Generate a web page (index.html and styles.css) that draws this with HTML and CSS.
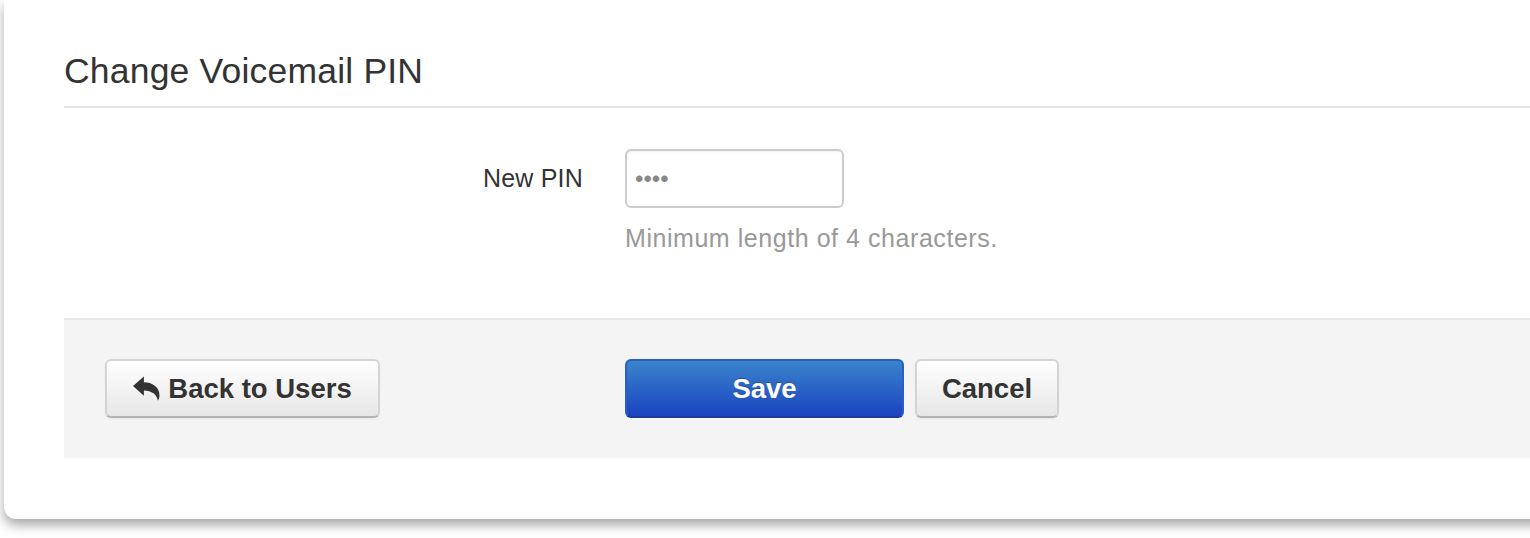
FILE: index.html
```html
<!DOCTYPE html>
<html lang="en">
<head>
<meta charset="utf-8">
<title>Change Voicemail PIN</title>
<link rel="stylesheet" href="styles.css">
</head>
<body>
<div class="card">
  <form class="form">
    <h2 class="legend">Change Voicemail PIN</h2>
    <div class="row">
      <label class="label" for="pin">New PIN</label>
      <div class="controls">
        <input class="input" id="pin" type="password" value="1234">
        <p class="help">Minimum length of 4 characters.</p>
      </div>
    </div>
    <div class="actions">
      <div class="actions-left">
        <button type="button" class="btn btn-back">
          <svg class="icon" viewBox="0 0 26 24" width="27" height="25" aria-hidden="true">
            <path d="M0 9.5 L10.5 0.5 V6 C18.5 6 25.5 10.5 25.5 18.5 C25.5 20.5 25 22.5 24 23.8 C23 18 18 14 10.5 14 V19 Z" fill="#333"/>
          </svg>
          Back to Users
        </button>
      </div>
      <div class="actions-right">
        <button type="submit" class="btn btn-primary">Save</button>
        <button type="button" class="btn btn-cancel">Cancel</button>
      </div>
    </div>
  </form>
</div>
</body>
</html>
```
FILE: styles.css
```css
html {
  margin: 0;
  padding: 0;
  background: #ffffff;
  overflow: hidden;
}
body {
  margin: 0;
  padding: 0 0 40px 0;
  font-family: "Liberation Sans", Arial, Helvetica, sans-serif;
  color: #333333;
}
.card {
  margin-left: 4px;
  margin-right: -40px;
  background: #ffffff;
  border-radius: 0 0 12px 12px;
  box-shadow: 0 6px 12px rgba(0, 0, 0, 0.35);
  padding: 51px 0 61px 60px;
}
.form {
  margin: 0;
}
.legend {
  margin: 0;
  padding: 0 0 15px 0;
  font-size: 35.5px;
  line-height: 40px;
  letter-spacing: 0.2px;
  font-weight: normal;
  color: #333333;
  border-bottom: 2px solid #e5e5e5;
}
.row {
  display: grid;
  grid-template-columns: 519px 1fr;
  column-gap: 42px;
  margin-top: 41px;
}
.label {
  text-align: right;
  font-size: 25px;
  line-height: 58px;
  letter-spacing: 0.2px;
  color: #333333;
}
.controls {
  display: flex;
  flex-direction: column;
  align-items: flex-start;
}
.input {
  box-sizing: border-box;
  width: 219px;
  height: 59px;
  margin: 0;
  padding: 0 8px;
  border: 2px solid #cccccc;
  border-radius: 6px;
  background: #ffffff;
  font-family: "Liberation Sans", Arial, sans-serif;
  font-size: 24px;
  letter-spacing: 0px;
  color: #888888;
  box-shadow: inset 0 1px 2px rgba(0, 0, 0, 0.06);
  outline: none;
}
.help {
  margin: 15px 0 0 0;
  font-size: 25px;
  line-height: 30px;
  letter-spacing: 0.55px;
  color: #999999;
}
.actions {
  display: grid;
  grid-template-columns: 561px 1fr;
  margin-top: 65px;
  padding: 39px 0 40px 0;
  background: #f4f4f4;
  border-top: 2px solid #e5e5e5;
}
.actions-left {
  padding-left: 41px;
}
.actions-right {
  display: flex;
  gap: 11px;
}
.btn {
  box-sizing: border-box;
  height: 59px;
  margin: 0;
  padding: 0 20px;
  display: inline-flex;
  align-items: center;
  justify-content: center;
  gap: 8px;
  font-family: "Liberation Sans", Arial, sans-serif;
  font-size: 27.5px;
  font-weight: bold;
  color: #333333;
  border-radius: 6px;
  cursor: pointer;
  text-shadow: 0 1px 1px rgba(255, 255, 255, 0.75);
}
.btn-back,
.btn-cancel {
  background: linear-gradient(to bottom, #ffffff, #e6e6e6);
  border: 2px solid #d4d4d4;
  border-bottom-color: #b3b3b3;
  box-shadow: inset 0 1px 0 rgba(255, 255, 255, 0.2), 0 1px 2px rgba(0, 0, 0, 0.05);
}
.btn-back {
  width: 275px;
}
.btn-cancel {
  width: 144px;
}
.btn-primary {
  width: 279px;
  color: #ffffff;
  text-shadow: 0 -1px 0 rgba(0, 0, 0, 0.25);
  background: linear-gradient(to bottom, #3a84cb, #1b43c1);
  border: 2px solid #2a5fbf;
  border-bottom-color: #1a3a9e;
}
.icon {
  display: block;
  flex: none;
}
```
